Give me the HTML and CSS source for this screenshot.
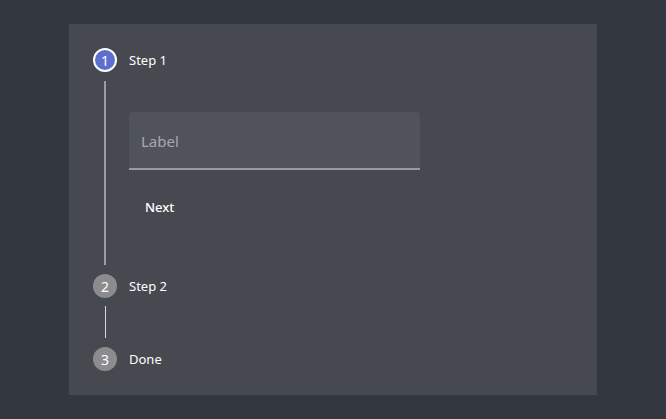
FILE: index.html
```html
<!DOCTYPE html>
<html>
<head>
<meta charset="utf-8">
<link rel="stylesheet" href="styles.css">
</head>
<body>
<div class="panel">
  <div class="step">
    <div class="head">
      <span class="dot active">1</span>
      <span class="title">Step 1</span>
    </div>
    <div class="body">
      <div class="line thick"></div>
      <div class="content">
        <div class="field"><span class="label">Label</span></div>
        <button class="next">Next</button>
      </div>
    </div>
  </div>
  <div class="step">
    <div class="head">
      <span class="dot">2</span>
      <span class="title">Step 2</span>
    </div>
    <div class="body short">
      <div class="line thin"></div>
    </div>
  </div>
  <div class="step">
    <div class="head">
      <span class="dot">3</span>
      <span class="title">Done</span>
    </div>
  </div>
</div>
</body>
</html>
```
FILE: styles.css
```css
html, body { margin: 0; padding: 0; }
body {
  background: #33373f;
  padding: 24px 69px;
  height: 419px;
  box-sizing: border-box;
  font-family: "Noto Sans", "Open Sans", sans-serif;
}
.panel {
  background: #464950;
  height: 371px;
  box-sizing: border-box;
  padding: 24px;
}
.head {
  display: flex;
  align-items: center;
  gap: 12px;
  height: 24px;
}
.dot {
  width: 24px;
  height: 24px;
  border-radius: 50%;
  background: #8c8c8f;
  color: #fff;
  font-size: 14px;
  display: flex;
  align-items: center;
  justify-content: center;
  box-sizing: border-box;
}
.dot.active {
  background: #5c6fcf;
  border: 2px solid #fff;
}
.title {
  color: #fff;
  font-size: 13px;
}
.body {
  display: flex;
  margin-left: 11px;
  padding: 9px 0;
}
.body.short { padding: 8px 0 9px; }
.line { background: #9b9ca0; }
.line.thick { width: 2px; }
.line.thin { width: 1px; height: 32px; margin-left: 0.5px; background: #d6d6d8; }
.content {
  padding: 31px 0 40px 23px;
  display: flex;
  flex-direction: column;
  align-items: flex-start;
}
.field {
  width: 291px;
  height: 58px;
  box-sizing: border-box;
  background: #50535b;
  border-radius: 4px 4px 0 0;
  border-bottom: 2px solid #9a9a9c;
  padding: 0 12px;
  display: flex;
  align-items: center;
}
.label {
  color: #a7a8ab;
  font-size: 15px;
  margin-top: 2px;
}
.next {
  margin-top: 19px;
  height: 36px;
  padding: 0 16px;
  background: transparent;
  border: none;
  color: #fff;
  font-family: inherit;
  font-size: 13px;
  font-weight: 500;
}
```
